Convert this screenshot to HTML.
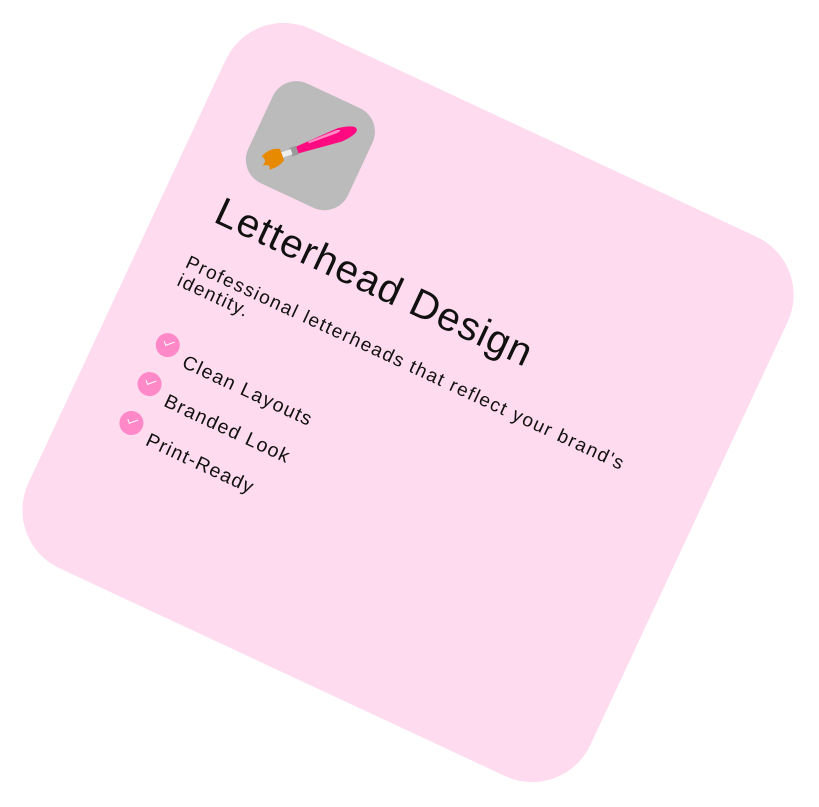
<!DOCTYPE html>
<html><head><meta charset="utf-8"><style>
html,body{margin:0;padding:0;background:#fff;width:819px;height:807px;overflow:hidden;}
.card{position:absolute;left:98px;top:104.5px;width:620px;height:595px;background:#fedbee;border-radius:64px;transform:rotate(25deg);font-family:"Liberation Sans",sans-serif;color:#111;}
.icon{position:absolute;left:58px;top:51px;width:110px;height:110px;background:#bbbbbb;border-radius:26px;}
.title{position:absolute;left:56px;top:181px;font-size:40px;letter-spacing:1.1px;white-space:nowrap;}
.desc{position:absolute;left:50px;top:254px;width:540px;font-size:19px;line-height:20px;letter-spacing:1.5px;}
.item{position:absolute;left:56px;font-size:19.5px;letter-spacing:1.3px;white-space:nowrap;}
.item .c{position:absolute;left:0;top:-12px;width:24px;height:24px;border-radius:50%;background:#ff88c8;}
.item .c:after{content:"";position:absolute;left:7px;top:6px;width:9px;height:4px;border-left:1.5px solid #fff;border-bottom:1.5px solid #fff;transform:rotate(-45deg);}
.item span{position:absolute;left:33px;top:-3px;}
</style></head><body>
<div class="card">
  <div class="icon">
    <svg width="110" height="110" viewBox="0 0 110 110">
      <g transform="translate(54,55) rotate(-44)">
        <path d="M-14,-3 L32,-7 Q50,-5 50,0 Q50,5 32,7 L-14,4 Z" fill="#ff0a80"/>
        <path d="M0,-4 L30,-5.5 Q38,-4.5 30,-2.5 L0,-2 Z" fill="#ff8cc4"/>
        <rect x="-20" y="-4" width="7" height="9" fill="#9a9a9a"/>
        <rect x="-29" y="-2.5" width="10" height="5.5" fill="#eeeeee"/>
        <path d="M-29,-6 Q-38,-11 -49,-5 Q-44,0 -51,4 Q-42,5 -46,10 Q-36,11 -29,6 Z" fill="#e88a00"/>
      </g>
    </svg>
  </div>
  <div class="title">Letterhead Design</div>
  <div class="desc">Professional letterheads that reflect your brand's identity.</div>
  <div class="item" style="top:347px"><div class="c"></div><span>Clean Layouts</span></div>
  <div class="item" style="top:390px"><div class="c"></div><span>Branded Look</span></div>
  <div class="item" style="top:433px"><div class="c"></div><span>Print-Ready</span></div>
</div>
</body></html>
